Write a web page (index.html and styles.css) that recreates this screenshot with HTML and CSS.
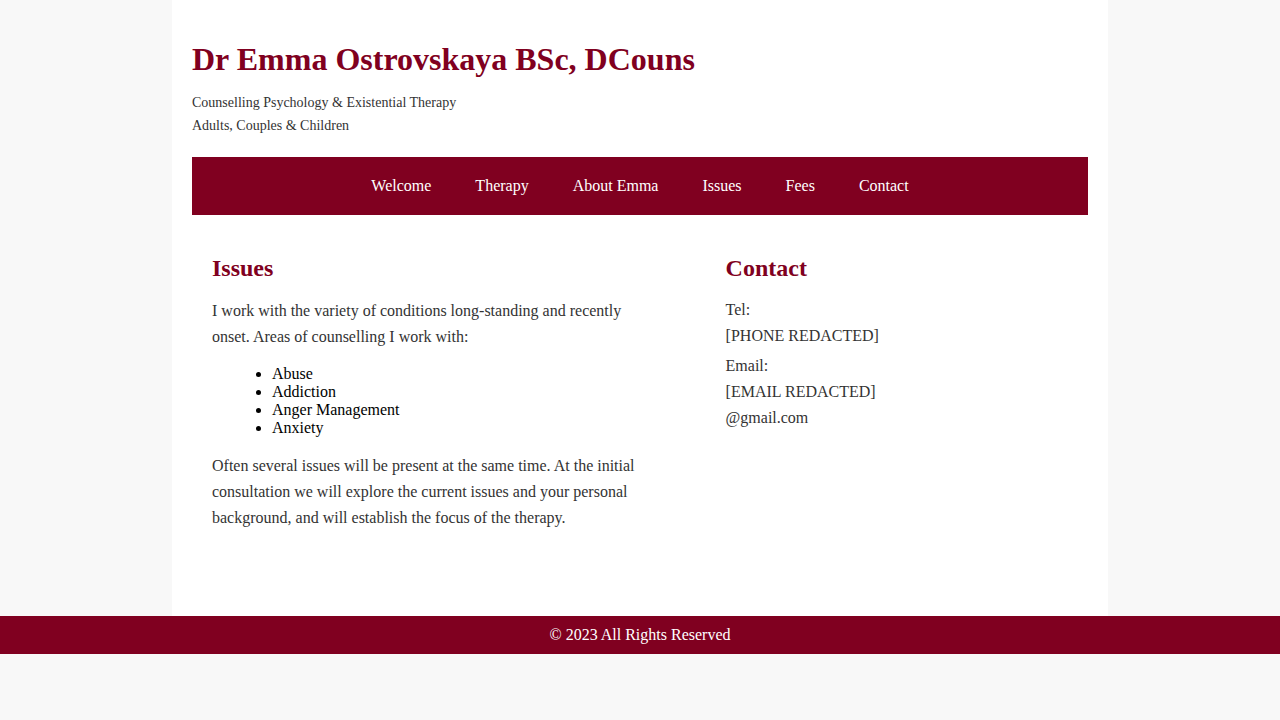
FILE: index.html
```html
<!DOCTYPE html>
<html lang="en">
<head>
<meta charset="utf-8">
<title>Dr Emma Ostrovskaya</title>
<link rel="stylesheet" href="styles.css">
</head>
<body>
<div class="page">
  <header class="site-header">
    <h1 class="site-title">Dr Emma Ostrovskaya BSc, DCouns</h1>
    <p class="tagline">Counselling Psychology &amp; Existential Therapy</p>
    <p class="tagline">Adults, Couples &amp; Children</p>
  </header>
  <nav class="main-nav">
    <a href="#">Welcome</a>
    <a href="#">Therapy</a>
    <a href="#">About Emma</a>
    <a href="#">Issues</a>
    <a href="#">Fees</a>
    <a href="#">Contact</a>
  </nav>
  <main class="content">
    <section class="issues">
      <h2 class="section-title">Issues</h2>
      <p class="text">I work with the variety of conditions long-standing and recently onset. Areas of counselling I work with:</p>
      <ul class="issue-list">
        <li>Abuse</li>
        <li>Addiction</li>
        <li>Anger Management</li>
        <li>Anxiety</li>
      </ul>
      <p class="text">Often several issues will be present at the same time. At the initial consultation we will explore the current issues and your personal background, and will establish the focus of the therapy.</p>
    </section>
    <aside class="contact">
      <h2 class="section-title">Contact</h2>
      <p class="contact-line contact-first">Tel:<br>[PHONE REDACTED]</p>
      <p class="contact-line">Email:<br>[EMAIL REDACTED]<br>@gmail.com</p>
    </aside>
  </main>
</div>
<footer class="site-footer">© 2023 All Rights Reserved</footer>
</body>
</html>
```

FILE: styles.css
```css
html, body {
  margin: 0;
  padding: 0;
}
body {
  background: #f8f8f8;
  font-family: "Liberation Serif", "Times New Roman", serif;
  font-size: 16px;
  color: #333;
}
.page {
  width: 936px;
  margin: 0 auto;
  background: #fff;
  padding: 20px 20px 70px;
  box-sizing: border-box;
}
.site-header {
  padding: 21px 0 20px;
}
.site-title {
  margin: 0 0 13px;
  font-size: 32px;
  font-weight: bold;
  color: #800020;
  line-height: 37px;
}
.tagline {
  margin: 0;
  font-size: 14px;
  line-height: 23px;
  color: #333;
}
.main-nav {
  background: #800020;
  display: flex;
  justify-content: center;
  gap: 44px;
  padding: 20px 0;
  line-height: 18px;
}
.main-nav a {
  color: #fff;
  text-decoration: none;
  font-size: 16px;
}
.content {
  display: grid;
  grid-template-columns: 3fr 2fr;
  padding: 20px 20px 0;
}
.section-title {
  margin: 19px 0 16px;
  font-size: 24px;
  line-height: 28px;
  color: #800020;
}
.text {
  max-width: 450px;
  margin: 0 0 15px;
  line-height: 26px;
}
.issue-list {
  margin: 15px 0 16px 20px;
  padding-left: 40px;
  color: #000;
  line-height: 18px;
}
.contact-line {
  margin: 0 0 4px;
  line-height: 26px;
}
.contact-first {
  margin-top: -1px;
}
.site-footer {
  background: #800020;
  color: #fff;
  text-align: center;
  padding: 10px 0;
  line-height: 18px;
}
```
